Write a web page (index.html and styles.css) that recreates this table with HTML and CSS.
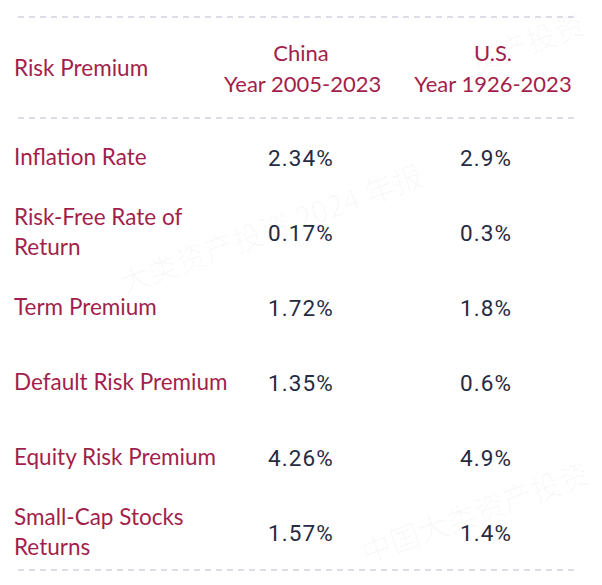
FILE: index.html
```html
<!DOCTYPE html>
<html lang="en">
<head>
<meta charset="utf-8">
<link rel="stylesheet" href="styles.css">
</head>
<body>
<div class="page">
  <div class="table">
    <div class="rule"></div>
    <div class="row head">
      <div class="label">Risk Premium</div>
      <div class="col cn">China<br>Year 2005-2023</div>
      <div class="col us">U.S.<br>Year 1926-2023</div>
    </div>
    <div class="rule"></div>
    <div class="row">
      <div class="label">Inflation Rate</div>
      <div class="num cn">2.34%</div>
      <div class="num us">2.9%</div>
    </div>
    <div class="row">
      <div class="label">Risk-Free Rate of<br>Return</div>
      <div class="num cn">0.17%</div>
      <div class="num us">0.3%</div>
    </div>
    <div class="row">
      <div class="label">Term Premium</div>
      <div class="num cn">1.72%</div>
      <div class="num us">1.8%</div>
    </div>
    <div class="row">
      <div class="label">Default Risk Premium</div>
      <div class="num cn">1.35%</div>
      <div class="num us">0.6%</div>
    </div>
    <div class="row">
      <div class="label">Equity Risk Premium</div>
      <div class="num cn">4.26%</div>
      <div class="num us">4.9%</div>
    </div>
    <div class="row">
      <div class="label">Small-Cap Stocks<br>Returns</div>
      <div class="num cn">1.57%</div>
      <div class="num us">1.4%</div>
    </div>
    <div class="rule"></div>
  </div>
  <div class="wm wm1">大类资产投资 2024 年报</div>
  <div class="wm wm2">资产投资</div>
  <div class="wm wm3">中国大类资产投资</div>
</div>
</body>
</html>
```
FILE: styles.css
```css
html, body {
  margin: 0;
  padding: 0;
  background: #ffffff;
}
body {
  width: 602px;
  height: 585px;
  overflow: hidden;
}
.page {
  position: relative;
  width: 602px;
  height: 585px;
  padding-top: 16px;
  box-sizing: border-box;
  overflow: hidden;
}
.table {
  display: flex;
  flex-direction: column;
}
.rule {
  margin-left: 18px;
  width: 560px;
  height: 2px;
  background: repeating-linear-gradient(to right, #dcdde6 0 6px, transparent 6px 11px);
}
.row {
  display: grid;
  grid-template-columns: 210px 154px 1fr;
  align-items: center;
  height: 75px;
  padding-left: 14px;
  padding-right: 14px;
}
.row.head {
  height: 99px;
}
.label {
  font-family: "Lato", "Noto Sans", sans-serif;
  font-size: 22.5px;
  line-height: 30px;
  color: #a31f4b;
  white-space: nowrap;
}
.col {
  font-family: "Lato", "Noto Sans", sans-serif;
  font-size: 22px;
  line-height: 31px;
  color: #a31f4b;
  text-align: center;
  white-space: nowrap;
}
.col.us {
  padding-left: 20px;
}
.num {
  font-family: "Roboto", "DejaVu Sans", sans-serif;
  font-size: 22.5px;
  line-height: 30px;
  color: #262b43;
  text-align: center;
  letter-spacing: 1.1px;
  padding-top: 2px;
}
.num.us {
  padding-left: 6px;
}
.wm {
  position: absolute;
  font-family: "Noto Sans CJK SC", sans-serif;
  font-size: 30px;
  color: rgba(40, 40, 60, 0.028);
  white-space: nowrap;
  transform: rotate(-20deg);
  transform-origin: left center;
  pointer-events: none;
}
.wm1 { left: 120px; top: 260px; }
.wm2 { left: 470px; top: 40px; }
.wm3 { left: 362px; top: 530px; }
```
